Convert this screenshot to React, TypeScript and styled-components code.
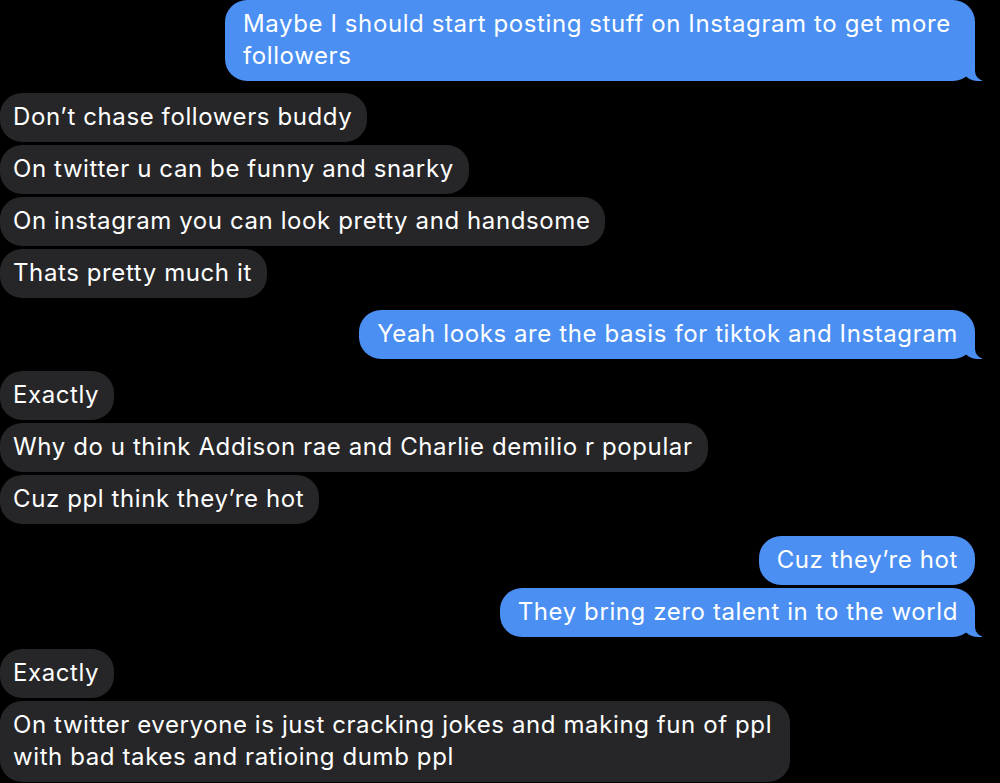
import React from "react";
import styled, { createGlobalStyle, css } from "styled-components";

const GlobalStyle = createGlobalStyle`
  html, body {
    margin: 0;
    padding: 0;
    background: #000000;
  }
  body {
    font-family: Inter, "Noto Sans", "Liberation Sans", sans-serif;
    -webkit-font-smoothing: antialiased;
  }
`;

const Thread = styled.div`
  width: 1000px;
  height: 783px;
  overflow: hidden;
  display: flex;
  flex-direction: column;
  gap: 12px;
  padding: 0 25px 0 0;
  box-sizing: border-box;
`;

const Group = styled.div<{ $me?: boolean }>`
  display: flex;
  flex-direction: column;
  gap: 3px;
  align-items: ${(p) => (p.$me ? "flex-end" : "flex-start")};
`;

const Bubble = styled.div<{ $me?: boolean; $tail?: boolean }>`
  position: relative;
  box-sizing: border-box;
  max-width: ${(p) => (p.$me ? "750px" : "790px")};
  padding: ${(p) => (p.$me ? "8px 17px 9px 18px" : "8px 15px 9px 13px")};
  border-radius: 22px;
  font-size: 24px;
  letter-spacing: 0.6px;
  line-height: 32px;
  font-weight: 400;
  color: #ffffff;
  background: ${(p) => (p.$me ? "#4a8ff1" : "#262628")};

  ${(p) =>
    p.$tail &&
    p.$me &&
    css`
      &::before {
        content: "";
        position: absolute;
        right: -7px;
        bottom: 0;
        width: 20px;
        height: 22px;
        background: #4a8ff1;
        border-bottom-left-radius: 16px 14px;
      }
      &::after {
        content: "";
        position: absolute;
        right: -10px;
        bottom: 0;
        width: 10px;
        height: 22px;
        background: #000000;
        border-bottom-left-radius: 10px;
      }
    `}
`;

type Block = { me: boolean; messages: string[] };

const blocks: Block[] = [
  {
    me: true,
    messages: [
      "Maybe I should start posting stuff on Instagram to get more followers",
    ],
  },
  {
    me: false,
    messages: [
      "Don\u2019t chase followers buddy",
      "On twitter u can be funny and snarky",
      "On instagram you can look pretty and handsome",
      "Thats pretty much it",
    ],
  },
  {
    me: true,
    messages: ["Yeah looks are the basis for tiktok and Instagram"],
  },
  {
    me: false,
    messages: [
      "Exactly",
      "Why do u think Addison rae and Charlie demilio r popular",
      "Cuz ppl think they\u2019re hot",
    ],
  },
  {
    me: true,
    messages: ["Cuz they\u2019re hot", "They bring zero talent in to the world"],
  },
  {
    me: false,
    messages: [
      "Exactly",
      "On twitter everyone is just cracking jokes and making fun of ppl with bad takes and ratioing dumb ppl",
    ],
  },
];

export default function App() {
  return (
    <>
      <GlobalStyle />
      <Thread>
        {blocks.map((b, i) => (
          <Group key={i} $me={b.me}>
            {b.messages.map((m, j) => (
              <Bubble
                key={j}
                $me={b.me}
                $tail={j === b.messages.length - 1}
              >
                {m}
              </Bubble>
            ))}
          </Group>
        ))}
      </Thread>
    </>
  );
}
